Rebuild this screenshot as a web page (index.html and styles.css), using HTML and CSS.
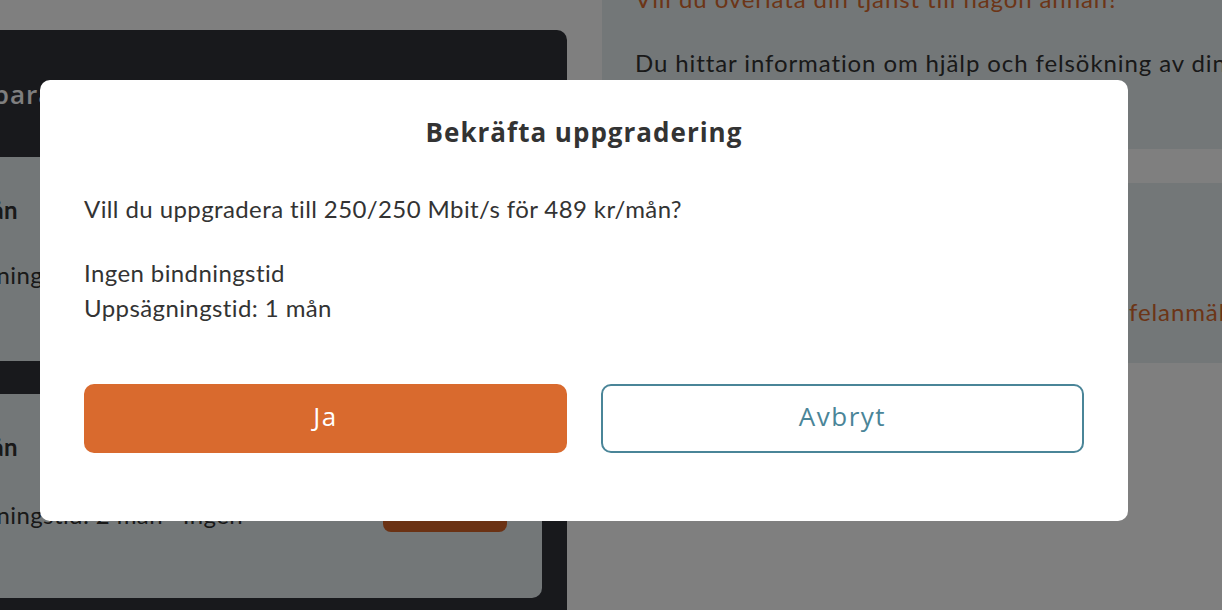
FILE: index.html
```html
<!DOCTYPE html>
<html lang="sv">
<head>
  <meta charset="UTF-8" />
  <meta name="viewport" content="width=device-width, initial-scale=1.0"/>
  <title>Bekräfta uppgradering</title>
  <link rel="stylesheet" href="styles.css">
</head>
<body>
  <div class="page">
    <div class="left-col">
      <div class="panel">
        <div class="panel-head"><span class="head-text">Uppgraderbara hastigheter</span></div>
        <div class="offer">
          <div class="row-end offer-title"><span>100/100 Mbit/s 389 kr/mån</span></div>
          <div class="row-end offer-meta"><span>Uppsägningstid: 1 mån · Ingen</span></div>
        </div>
        <div class="offer">
          <div class="row-end offer-title"><span>250/250 Mbit/s 489 kr/mån</span></div>
          <div class="offer-line">
            <div class="row-end offer-meta"><span>Uppsägningstid: 2 mån · Ingen</span></div>
            <button class="offer-btn">Välj</button>
          </div>
        </div>
      </div>
    </div>
    <div class="right-col">
      <div class="info">
        <p class="link top-link">Vill du överlåta din tjänst till någon annan?</p>
        <p>Du hittar information om hjälp och felsökning av din tjänst här.</p>
      </div>
      <div class="info info-second">
        <p class="far-line"><span class="link">felanmälan</span></p>
      </div>
    </div>
  </div>

  <div class="overlay">
    <div class="modal">
      <h2>Bekräfta uppgradering</h2>
      <p class="question">Vill du uppgradera till 250/250 Mbit/s för 489 kr/mån?</p>
      <p class="terms">Ingen bindningstid<br>Uppsägningstid: 1 mån</p>
      <div class="actions">
        <button class="btn btn-primary">Ja</button>
        <button class="btn btn-outline">Avbryt</button>
      </div>
    </div>
  </div>
</body>
</html>
```

FILE: styles.css
```css
body { margin: 0; background: #fff; font-family: 'Lato', 'Liberation Sans', sans-serif; color: #333; overflow: hidden; }
.page { display: flex; height: 610px; overflow: hidden; }
.left-col { flex: 0 0 602px; padding-top: 30px; }
.panel { margin-left: -40px; width: 607px; height: 600px; background: #303239; border-radius: 0 10px 0 0; padding-right: 25px; box-sizing: border-box; }
.panel-head { height: 127px; display: flex; align-items: center; color: #fff; font-family: 'Open Sans', sans-serif; font-weight: 600; font-size: 26px; letter-spacing: 1px; white-space: nowrap; }
.head-text { margin-left: -111px; }
.row-end { display: flex; justify-content: flex-end; white-space: nowrap; }
.offer { background: #e6eef1; height: 204px; margin-bottom: 33px; border-radius: 0 0 10px 0; padding-top: 38px; box-sizing: border-box; font-size: 24px; letter-spacing: 0.4px; }
.offer-title { width: 58px; font-weight: 700; }
.offer-meta { width: 283px; margin-top: 36px; }
.offer-line { display: flex; justify-content: space-between; align-items: center; padding-right: 35px; }
.offer-btn { margin-top: 33px; width: 124px; height: 38px; border: none; border-radius: 8px; background: #d66428; color: #fff; }

.right-col { flex: 1; }
.info { background: #e6eef1; height: 149px; padding: 0 0 0 33px; box-sizing: border-box; font-size: 24px; letter-spacing: 0.9px; overflow: hidden; }
.info p { margin: 0; white-space: nowrap; }
.info-second { margin-top: 34px; height: 180px; padding-top: 114px; }
.link { color: #d96a2e; }
.top-link { margin-top: -16px !important; height: 64px; }
.far-line { padding-left: 494px; }

.overlay { position: fixed; inset: 0; background: rgba(0, 0, 0, 0.5); padding: 80px 0 0 40px; }
.modal { width: 1088px; box-sizing: border-box; background: #fff; border-radius: 10px; padding: 33px 44px 68px; }
.modal h2 { margin: 0 0 40px; text-align: center; font-family: 'Open Sans', sans-serif; font-weight: 700; font-size: 26px; letter-spacing: 1px; line-height: 38px; color: #333; }
.modal p { margin: 0; font-size: 24px; letter-spacing: 0.4px; line-height: 35px; color: #333; }
.modal .terms { margin-top: 29px; }
.actions { display: grid; grid-template-columns: 1fr 1fr; gap: 34px; margin-top: 59px; }
.btn { height: 69px; border-radius: 10px; font-family: 'Open Sans', sans-serif; font-size: 26px; letter-spacing: 1.5px; font-weight: 500; padding: 0 0 6px; cursor: pointer; }
.btn-primary { background: #d96a2e; color: #fff; border: none; }
.btn-outline { background: #fff; color: #4a8598; border: 2px solid #4a8598; }
```
